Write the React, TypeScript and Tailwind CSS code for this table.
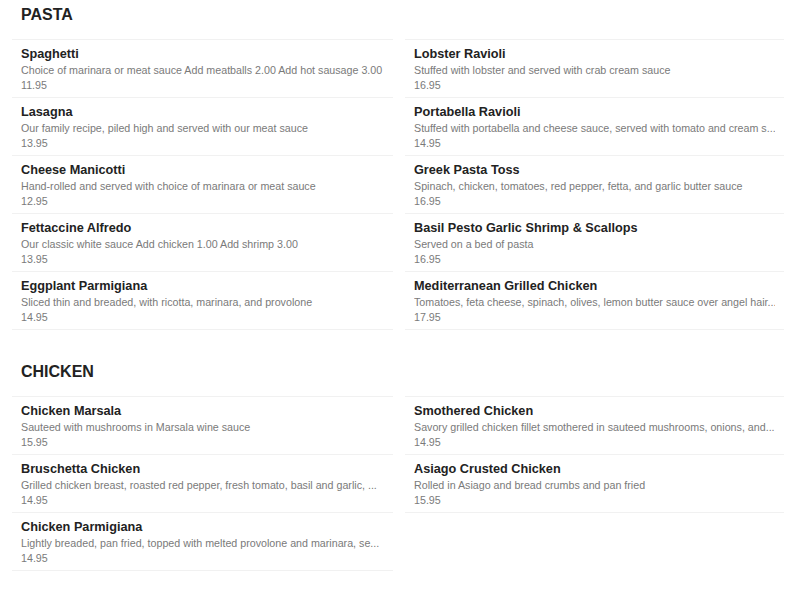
import React from "react";

type Item = { name: string; desc: string; price: string };

const pastaLeft: Item[] = [
  { name: "Spaghetti", desc: "Choice of marinara or meat sauce Add meatballs 2.00 Add hot sausage 3.00", price: "11.95" },
  { name: "Lasagna", desc: "Our family recipe, piled high and served with our meat sauce", price: "13.95" },
  { name: "Cheese Manicotti", desc: "Hand-rolled and served with choice of marinara or meat sauce", price: "12.95" },
  { name: "Fettaccine Alfredo", desc: "Our classic white sauce Add chicken 1.00 Add shrimp 3.00", price: "13.95" },
  { name: "Eggplant Parmigiana", desc: "Sliced thin and breaded, with ricotta, marinara, and provolone", price: "14.95" },
];

const pastaRight: Item[] = [
  { name: "Lobster Ravioli", desc: "Stuffed with lobster and served with crab cream sauce", price: "16.95" },
  { name: "Portabella Ravioli", desc: "Stuffed with portabella and cheese sauce, served with tomato and cream s...", price: "14.95" },
  { name: "Greek Pasta Toss", desc: "Spinach, chicken, tomatoes, red pepper, fetta, and garlic butter sauce", price: "16.95" },
  { name: "Basil Pesto Garlic Shrimp & Scallops", desc: "Served on a bed of pasta", price: "16.95" },
  { name: "Mediterranean Grilled Chicken", desc: "Tomatoes, feta cheese, spinach, olives, lemon butter sauce over angel hair...", price: "17.95" },
];

const chickenLeft: Item[] = [
  { name: "Chicken Marsala", desc: "Sauteed with mushrooms in Marsala wine sauce", price: "15.95" },
  { name: "Bruschetta Chicken", desc: "Grilled chicken breast, roasted red pepper, fresh tomato, basil and garlic, ...", price: "14.95" },
  { name: "Chicken Parmigiana", desc: "Lightly breaded, pan fried, topped with melted provolone and marinara, se...", price: "14.95" },
];

const chickenRight: Item[] = [
  { name: "Smothered Chicken", desc: "Savory grilled chicken fillet smothered in sauteed mushrooms, onions, and...", price: "14.95" },
  { name: "Asiago Crusted Chicken", desc: "Rolled in Asiago and bread crumbs and pan fried", price: "15.95" },
];

function Column({ items }: { items: Item[] }) {
  return (
    <div className="border-t border-[#f1f1f1]">
      {items.map((it) => (
        <div key={it.name} className="border-b border-[#f1f1f1] px-[9px] pt-[6px] pb-[4px]">
          <div className="text-[12.7px] font-bold leading-[17px] text-[#222222] whitespace-nowrap overflow-hidden">{it.name}</div>
          <div className="text-[10.7px] leading-[15px] text-[#7a7a7a] whitespace-nowrap overflow-hidden">{it.desc}</div>
          <div className="text-[10.7px] leading-[15px] text-[#7a7a7a]">{it.price}</div>
        </div>
      ))}
    </div>
  );
}

function Section({ title, left, right, className }: { title: string; left: Item[]; right: Item[]; className?: string }) {
  return (
    <section className={className}>
      <h2 className="px-[9px] pt-[5px] pb-[14px] text-[16px] font-bold leading-[20px] text-[#222222]">{title}</h2>
      <div className="grid grid-cols-[381px_379px] gap-x-[12px] items-start">
        <Column items={left} />
        <Column items={right} />
      </div>
    </section>
  );
}

export default function App() {
  return (
    <div className="min-h-[594px] w-[800px] bg-white pl-[12px]" style={{ fontFamily: '"Liberation Sans", Arial, sans-serif' }}>
      <Section title="PASTA" left={pastaLeft} right={pastaRight} />
      <Section title="CHICKEN" left={chickenLeft} right={chickenRight} className="mt-[27px]" />
    </div>
  );
}
